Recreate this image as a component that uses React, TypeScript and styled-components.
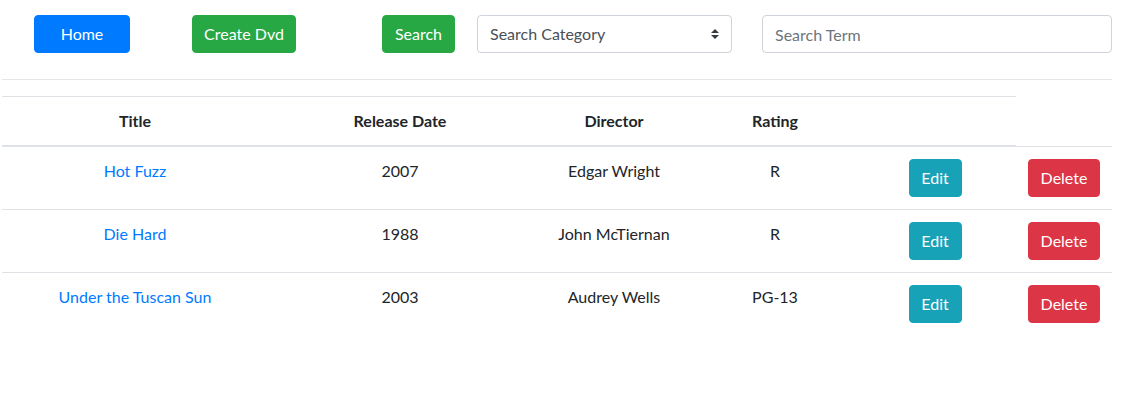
import React from "react";
import styled, { createGlobalStyle } from "styled-components";

const Global = createGlobalStyle`
  html, body { margin: 0; padding: 0; background: #fff; }
  body {
    font-family: Lato, "Liberation Sans", sans-serif;
    font-size: 16px;
    line-height: 1.5;
    color: #212529;
  }
  * { box-sizing: border-box; }
`;

const Page = styled.div`
  padding: 15px 0 0 2px;
  width: 1112px;
`;

const Toolbar = styled.div`
  display: flex;
  align-items: center;
  height: 38px;
`;

const colors: Record<string, string> = {
  primary: "#007bff",
  success: "#28a745",
  info: "#17a2b8",
  danger: "#dc3545",
};

const Button = styled.button<{ $variant: string; $width?: number; $ml?: number }>`
  font-family: inherit;
  font-size: 16px;
  line-height: 24px;
  padding: 6px 0;
  border: 1px solid ${(p) => colors[p.$variant]};
  background: ${(p) => colors[p.$variant]};
  color: #fff;
  border-radius: 4px;
  height: 38px;
  width: ${(p) => p.$width ?? 60}px;
  flex: none;
  white-space: nowrap;
  margin-left: ${(p) => p.$ml ?? 0}px;
  text-align: center;
  cursor: pointer;
`;

const SelectBox = styled.div`
  margin-left: 22px;
  width: 255px;
  flex: none;
  height: 38px;
  border: 1px solid #ced4da;
  border-radius: 4px;
  display: flex;
  align-items: center;
  justify-content: space-between;
  padding: 0 12px 0 12px;
  color: #495057;
  font-size: 16px;
`;

const Input = styled.input`
  margin-left: 30px;
  width: 350px;
  flex: none;
  height: 38px;
  border: 1px solid #ced4da;
  border-radius: 4px;
  padding: 6px 12px;
  font-family: inherit;
  font-size: 16px;
  color: #495057;
  &::placeholder { color: #6c757d; opacity: 1; }
`;

const Rule = styled.hr`
  margin: 26px 0 16px 0;
  border: 0;
  border-top: 1px solid rgba(0, 0, 0, 0.1);
  width: 1110px;
`;

const Table = styled.table`
  border-collapse: collapse;
  table-layout: fixed;
  width: 1110px;
`;

const Th = styled.th`
  padding: 12px;
  line-height: 24px;
  font-weight: 700;
  text-align: center;
  border-top: 1px solid #dee2e6;
  border-bottom: 2px solid #dee2e6;
  vertical-align: bottom;
`;

const Td = styled.td`
  padding: 12px;
  line-height: 24px;
  text-align: center;
  vertical-align: top;
  border-top: 1px solid #dee2e6;
`;

const Link = styled.a`
  color: #007bff;
  text-decoration: none;
`;

const Arrows = () => (
  <svg width="8" height="10" viewBox="0 0 8 10">
    <path d="M4 0 L8 4 H0 Z" fill="#343a40" />
    <path d="M4 10 L8 6 H0 Z" fill="#343a40" />
  </svg>
);

const dvds = [
  { title: "Hot Fuzz", year: "2007", director: "Edgar Wright", rating: "R" },
  { title: "Die Hard", year: "1988", director: "John McTiernan", rating: "R" },
  { title: "Under the Tuscan Sun", year: "2003", director: "Audrey Wells", rating: "PG-13" },
];

const widths = [266, 264, 164, 158, 162, 96];

export default function App() {
  return (
    <>
      <Global />
      <Page>
        <Toolbar>
          <Button $variant="primary" $width={96} $ml={32}>Home</Button>
          <Button $variant="success" $width={104} $ml={62}>Create Dvd</Button>
          <Button $variant="success" $width={73} $ml={86}>Search</Button>
          <SelectBox>
            <span>Search Category</span>
            <Arrows />
          </SelectBox>
          <Input placeholder="Search Term" />
        </Toolbar>
        <Rule />
        <Table>
          <colgroup>
            {widths.map((w, i) => (
              <col key={i} style={{ width: w }} />
            ))}
          </colgroup>
          <thead>
            <tr>
              <Th>Title</Th>
              <Th>Release Date</Th>
              <Th>Director</Th>
              <Th>Rating</Th>
              <Th></Th>
            </tr>
          </thead>
          <tbody>
            {dvds.map((d) => (
              <tr key={d.title}>
                <Td><Link href="#">{d.title}</Link></Td>
                <Td>{d.year}</Td>
                <Td>{d.director}</Td>
                <Td>{d.rating}</Td>
                <Td><Button $variant="info" $width={53}>Edit</Button></Td>
                <Td><Button $variant="danger" $width={72}>Delete</Button></Td>
              </tr>
            ))}
          </tbody>
        </Table>
      </Page>
    </>
  );
}
